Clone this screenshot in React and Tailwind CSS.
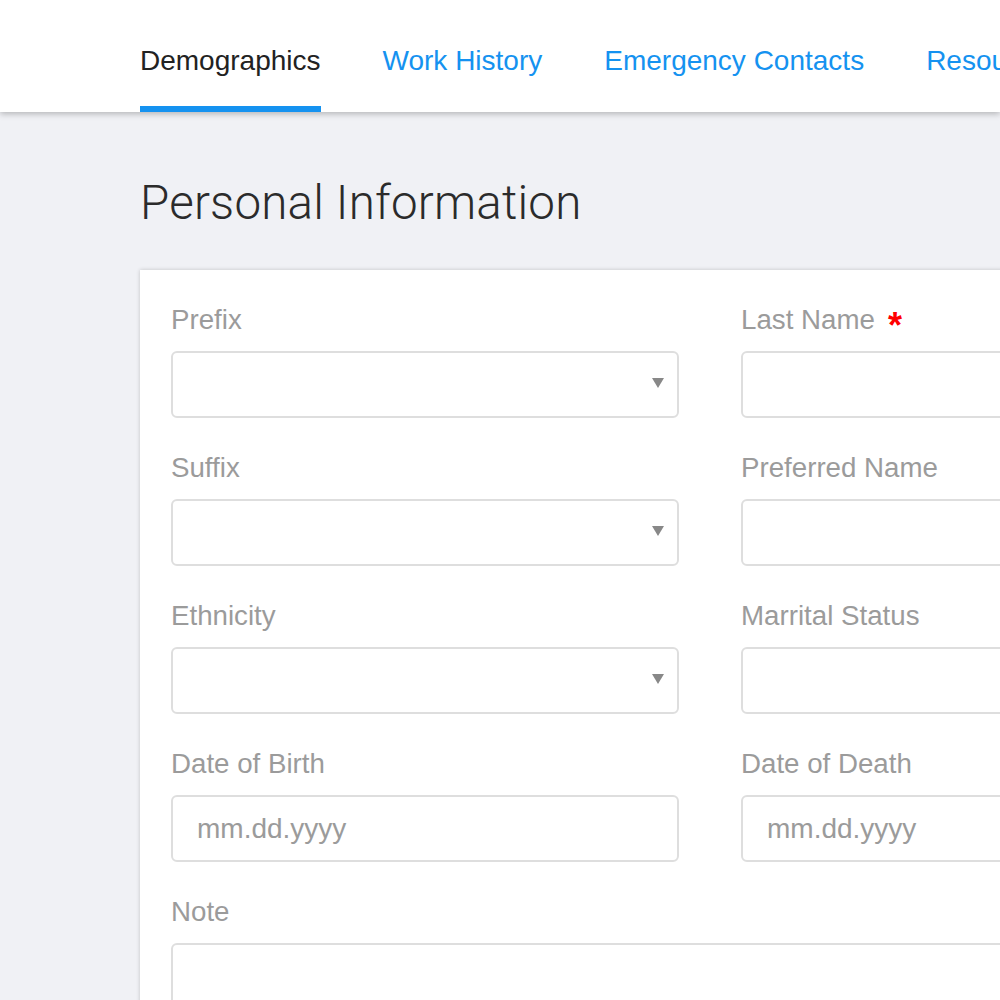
import React from 'react';

const tabs = ['Demographics', 'Work History', 'Emergency Contacts', 'Resources'];

const fields = [
    { label: 'Prefix', type: 'select' },
    { label: 'Last Name', type: 'input', required: true },
    { label: 'Suffix', type: 'select' },
    { label: 'Preferred Name', type: 'input' },
    { label: 'Ethnicity', type: 'select' },
    { label: 'Marrital Status', type: 'input' },
    { label: 'Date of Birth', type: 'input', placeholder: 'mm.dd.yyyy' },
    { label: 'Date of Death', type: 'input', placeholder: 'mm.dd.yyyy' },
];

function Field({ field }) {
    return (
        <div className="flex flex-col">
            <label className="flex items-center h-[30px] text-[27.7px] leading-[30px] text-[#9b9b9b] whitespace-nowrap">
                {field.label}
                {field.required && (
                    <span className="ml-[13px] text-[#ff0000] text-[36px] font-bold leading-none mt-[12px]">*</span>
                )}
            </label>
            <div className="relative mt-[16px] h-[67px] rounded-[6px] border-2 border-[#dedede] bg-white">
                {field.placeholder && (
                    <span className="absolute left-[24px] top-0 h-full flex items-center text-[28px] text-[#9b9b9b]">
                        {field.placeholder}
                    </span>
                )}
                {field.type === 'select' && (
                    <svg className="absolute right-[13px] top-[25px]" width="12" height="10" viewBox="0 0 12 10">
                        <path d="M0 0 H12 L6 10 Z" fill="#888888" />
                    </svg>
                )}
            </div>
        </div>
    );
}

export default function App() {
    return (
        <div className="w-[1000px] h-[1000px] overflow-hidden bg-[#f0f1f5]" style={{ fontFamily: '"Liberation Sans", Arial, sans-serif' }}>
            {/* tabs header */}
            <div className="relative z-10 h-[112px] bg-white shadow-[0_2px_6px_rgba(0,0,0,0.25)]">
                <div className="flex h-full pl-[140px] gap-[62px] whitespace-nowrap">
                    {tabs.map((tab, index) => (
                        <div
                            key={tab}
                            className={
                                index === 0
                                    ? 'flex items-center h-full pt-[16px] text-[28px] text-[#222222] border-b-[6px] border-[#1592f0]'
                                    : 'flex items-center h-full pt-[10px] text-[28px] text-[#1592f0]'
                            }
                        >
                            {tab}
                        </div>
                    ))}
                </div>
            </div>

            {/* content */}
            <div className="pl-[140px]">
                <h1
                    className="pt-[63px] text-[47.5px] leading-[56px] font-light text-[#2b2b2b] tracking-[0.2px]"
                    style={{ fontFamily: 'Roboto, sans-serif' }}
                >
                    Personal Information
                </h1>
                <div className="mt-[39px] w-[1140px] bg-white shadow-[0_0_4px_rgba(0,0,0,0.2)] pl-[31px] pr-[31px] pt-[35px] pb-[40px]">
                    <div className="grid grid-cols-[508px_508px] gap-x-[62px] gap-y-[35px]">
                        {fields.map((field) => (
                            <Field key={field.label} field={field} />
                        ))}
                    </div>
                    <div className="mt-[35px] flex flex-col">
                        <label className="h-[30px] text-[27.7px] leading-[30px] text-[#9b9b9b]">Note</label>
                        <div className="mt-[16px] h-[140px] rounded-[6px] border-2 border-[#dedede]"></div>
                    </div>
                </div>
            </div>
        </div>
    );
}
